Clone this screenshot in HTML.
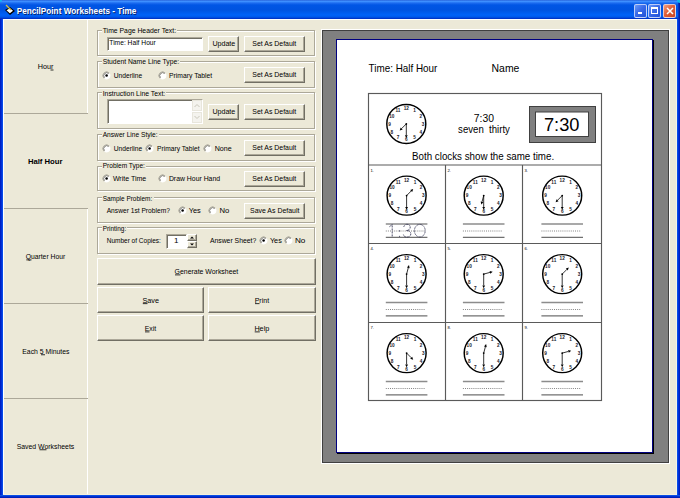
<!DOCTYPE html><html><head><meta charset="utf-8"><style>
*{margin:0;padding:0;box-sizing:border-box}
html,body{width:680px;height:498px;overflow:hidden;background:#ECE9D8;font-family:"Liberation Sans", sans-serif;}
.abs{position:absolute}
.gb{position:absolute;border:1px solid #ACA899;box-shadow:1px 1px 0 #fff, inset 1px 1px 0 #fff;}
.btn{position:absolute;background:#ECE9D8;border-top:1px solid #fff;border-left:1px solid #fff;border-right:1px solid #716F64;border-bottom:1px solid #716F64;box-shadow:inset -1px -1px 0 #ACA899;}
.edit{position:absolute;background:#fff;border-top:1px solid #ACA899;border-left:1px solid #ACA899;border-right:1px solid #fff;border-bottom:1px solid #fff;box-shadow:inset 1px 1px 0 #716F64;}
svg{position:absolute;left:0;top:0;overflow:visible}
</style></head><body>

<div class="abs" style="left:0;top:0;width:680px;height:19px;background:linear-gradient(#2A66DC 0px,#3D8EFF 1.5px,#1D6CF0 3px,#0055E5 5px,#0053E0 10px,#0062F8 15px,#0058EA 17px,#0035C8 18.5px,#0030C0 19px);"></div>
<svg style="left:4px;top:4px" width="12" height="12" viewBox="0 0 12 12">
<path d="M1 6 L6 3 L11 7 L6 11 Z" fill="#000"/><path d="M2.5 6.2 L6 4.2 L9 6.8 L5.8 9.2 Z" fill="#fff"/>
<path d="M2 1 L7 6" stroke="#D8C040" stroke-width="1.2"/></svg>
<div class="abs" style="left:633.5px;top:4px;width:13px;height:13.5px;border-radius:2px;border:1px solid rgba(235,240,255,.75);background:linear-gradient(135deg,#6A9AF8,#3A6AE8 45%,#2052D8);"><div class="abs" style="left:3px;top:7px;width:4px;height:2px;background:#fff"></div></div>
<div class="abs" style="left:648px;top:4px;width:13px;height:13.5px;border-radius:2px;border:1px solid rgba(235,240,255,.75);background:linear-gradient(135deg,#6A9AF8,#3A6AE8 45%,#2052D8);"><div class="abs" style="left:2px;top:2px;width:7px;height:7px;border:1px solid #fff;border-top-width:2px"></div></div>
<div class="abs" style="left:663px;top:4px;width:13px;height:13.5px;border-radius:2px;border:1px solid rgba(235,240,255,.75);background:linear-gradient(135deg,#F2A080,#E0603A 45%,#C84420);"><svg style="left:1.5px;top:1.5px" width="8" height="8"><path d="M1 1L7 7M7 1L1 7" stroke="#fff" stroke-width="1.5"/></svg></div>
<div class="abs" style="left:678px;top:2px;width:2px;height:17px;background:linear-gradient(90deg,#0A3AD0,#001A90)"></div>
<div class="abs" style="left:0;top:0;width:2px;height:2px;background:#10B8F0;border-bottom-right-radius:2px"></div>
<div class="abs" style="left:677px;top:0;width:3px;height:3px;background:#10B8F0;border-bottom-left-radius:3px"></div>
<div class="abs" style="left:0;top:19px;width:3px;height:479px;background:linear-gradient(90deg,#0018B8,#0030D8 50%,#0A58F0)"></div>
<div class="abs" style="left:677px;top:19px;width:3px;height:479px;background:linear-gradient(90deg,#0A58F0,#0030D8 50%,#0018B8)"></div>
<div class="abs" style="left:0;top:495px;width:680px;height:3px;background:linear-gradient(#1060F0,#0030D0 50%,#0018B0)"></div>
<div class="abs" style="left:3px;top:19px;width:674px;height:1px;background:#fff"></div>
<div class="abs" style="left:3px;top:19px;width:1px;height:476px;background:#fff"></div>
<div class="abs" style="left:87px;top:20px;width:1px;height:94px;background:#fff"></div>
<div class="abs" style="left:87px;top:208px;width:1px;height:287px;background:#fff"></div>
<div class="abs" style="left:4px;top:113px;width:84px;height:1px;background:#ACA899"></div>
<div class="abs" style="left:4px;top:208px;width:84px;height:1px;background:#ACA899"></div>
<div class="abs" style="left:4px;top:303px;width:84px;height:1px;background:#ACA899"></div>
<div class="abs" style="left:4px;top:398px;width:84px;height:1px;background:#ACA899"></div>
<div class="abs" style="left:3px;top:494px;width:674px;height:1px;background:#F6F0DC"></div>
<div class="abs" style="left:676px;top:19px;width:1px;height:476px;background:#F6F3E6"></div>
<div class="gb" style="left:97px;top:30px;width:218px;height:26px"></div>
<div class="abs" style="left:102px;top:30px;width:75.3px;height:2px;background:#ECE9D8"></div>
<div class="edit" style="left:107px;top:37px;width:96px;height:14px"></div>
<div class="btn" style="left:208px;top:36px;width:31px;height:16px"></div>
<div class="btn" style="left:244px;top:36px;width:61px;height:16px"></div>
<div class="gb" style="left:97px;top:61px;width:218px;height:27px"></div>
<div class="abs" style="left:102px;top:61px;width:78.3px;height:2px;background:#ECE9D8"></div>
<svg style="left:101.80px;top:71.00px" width="10" height="10" viewBox="0 0 10 10"><circle cx="4.6" cy="4.6" r="3.8" fill="#fff"/><path d="M1.9 7.3 A3.8 3.8 0 0 1 7.3 1.9" fill="none" stroke="#ACA899" stroke-width="0.9"/><path d="M2.55 6.65 A2.9 2.9 0 0 1 6.65 2.55" fill="none" stroke="#5E5C52" stroke-width="0.8"/><circle cx="4.6" cy="4.6" r="1.25" fill="#000"/></svg>
<svg style="left:157.50px;top:71.00px" width="10" height="10" viewBox="0 0 10 10"><circle cx="4.6" cy="4.6" r="3.8" fill="#fff"/><path d="M1.9 7.3 A3.8 3.8 0 0 1 7.3 1.9" fill="none" stroke="#ACA899" stroke-width="0.9"/><path d="M2.55 6.65 A2.9 2.9 0 0 1 6.65 2.55" fill="none" stroke="#5E5C52" stroke-width="0.8"/></svg>
<div class="btn" style="left:244px;top:67px;width:61px;height:16px"></div>
<div class="gb" style="left:97px;top:92px;width:218px;height:37px"></div>
<div class="abs" style="left:102px;top:92px;width:64.4px;height:2px;background:#ECE9D8"></div>
<div class="edit" style="left:107px;top:99px;width:96px;height:25px"></div>
<div class="abs" style="left:192px;top:100px;width:10px;height:11px;background:#F4F3EE;border:1px solid #E8E6DC"></div>
<div class="abs" style="left:192px;top:112px;width:10px;height:11px;background:#F4F3EE;border:1px solid #E8E6DC"></div>
<svg style="left:192px;top:100px" width="10" height="23"><path d="M2.5 7 L5 4.5 L7.5 7" stroke="#C9C7BA" fill="none"/><path d="M2.5 16 L5 18.5 L7.5 16" stroke="#C9C7BA" fill="none"/></svg>
<div class="btn" style="left:208px;top:104px;width:31px;height:16px"></div>
<div class="btn" style="left:244px;top:104px;width:61px;height:16px"></div>
<div class="gb" style="left:97px;top:134px;width:218px;height:27px"></div>
<div class="abs" style="left:102px;top:134px;width:56.8px;height:2px;background:#ECE9D8"></div>
<svg style="left:102.00px;top:143.80px" width="10" height="10" viewBox="0 0 10 10"><circle cx="4.6" cy="4.6" r="3.8" fill="#fff"/><path d="M1.9 7.3 A3.8 3.8 0 0 1 7.3 1.9" fill="none" stroke="#ACA899" stroke-width="0.9"/><path d="M2.55 6.65 A2.9 2.9 0 0 1 6.65 2.55" fill="none" stroke="#5E5C52" stroke-width="0.8"/></svg>
<svg style="left:145.30px;top:143.80px" width="10" height="10" viewBox="0 0 10 10"><circle cx="4.6" cy="4.6" r="3.8" fill="#fff"/><path d="M1.9 7.3 A3.8 3.8 0 0 1 7.3 1.9" fill="none" stroke="#ACA899" stroke-width="0.9"/><path d="M2.55 6.65 A2.9 2.9 0 0 1 6.65 2.55" fill="none" stroke="#5E5C52" stroke-width="0.8"/><circle cx="4.6" cy="4.6" r="1.25" fill="#000"/></svg>
<svg style="left:203.00px;top:143.80px" width="10" height="10" viewBox="0 0 10 10"><circle cx="4.6" cy="4.6" r="3.8" fill="#fff"/><path d="M1.9 7.3 A3.8 3.8 0 0 1 7.3 1.9" fill="none" stroke="#ACA899" stroke-width="0.9"/><path d="M2.55 6.65 A2.9 2.9 0 0 1 6.65 2.55" fill="none" stroke="#5E5C52" stroke-width="0.8"/></svg>
<div class="btn" style="left:244px;top:140px;width:61px;height:16px"></div>
<div class="gb" style="left:97px;top:166px;width:218px;height:25px"></div>
<div class="abs" style="left:102px;top:166px;width:44.1px;height:2px;background:#ECE9D8"></div>
<svg style="left:101.90px;top:174.00px" width="10" height="10" viewBox="0 0 10 10"><circle cx="4.6" cy="4.6" r="3.8" fill="#fff"/><path d="M1.9 7.3 A3.8 3.8 0 0 1 7.3 1.9" fill="none" stroke="#ACA899" stroke-width="0.9"/><path d="M2.55 6.65 A2.9 2.9 0 0 1 6.65 2.55" fill="none" stroke="#5E5C52" stroke-width="0.8"/><circle cx="4.6" cy="4.6" r="1.25" fill="#000"/></svg>
<svg style="left:157.50px;top:174.00px" width="10" height="10" viewBox="0 0 10 10"><circle cx="4.6" cy="4.6" r="3.8" fill="#fff"/><path d="M1.9 7.3 A3.8 3.8 0 0 1 7.3 1.9" fill="none" stroke="#ACA899" stroke-width="0.9"/><path d="M2.55 6.65 A2.9 2.9 0 0 1 6.65 2.55" fill="none" stroke="#5E5C52" stroke-width="0.8"/></svg>
<div class="btn" style="left:244px;top:171px;width:61px;height:16px"></div>
<div class="gb" style="left:97px;top:197px;width:218px;height:26px"></div>
<div class="abs" style="left:102px;top:197px;width:51.5px;height:2px;background:#ECE9D8"></div>
<svg style="left:177.60px;top:205.80px" width="10" height="10" viewBox="0 0 10 10"><circle cx="4.6" cy="4.6" r="3.8" fill="#fff"/><path d="M1.9 7.3 A3.8 3.8 0 0 1 7.3 1.9" fill="none" stroke="#ACA899" stroke-width="0.9"/><path d="M2.55 6.65 A2.9 2.9 0 0 1 6.65 2.55" fill="none" stroke="#5E5C52" stroke-width="0.8"/><circle cx="4.6" cy="4.6" r="1.25" fill="#000"/></svg>
<svg style="left:208.00px;top:205.80px" width="10" height="10" viewBox="0 0 10 10"><circle cx="4.6" cy="4.6" r="3.8" fill="#fff"/><path d="M1.9 7.3 A3.8 3.8 0 0 1 7.3 1.9" fill="none" stroke="#ACA899" stroke-width="0.9"/><path d="M2.55 6.65 A2.9 2.9 0 0 1 6.65 2.55" fill="none" stroke="#5E5C52" stroke-width="0.8"/></svg>
<div class="btn" style="left:244px;top:203px;width:61px;height:16px"></div>
<div class="gb" style="left:97px;top:227px;width:218px;height:27px"></div>
<div class="abs" style="left:102px;top:227px;width:25.4px;height:2px;background:#ECE9D8"></div>
<div class="edit" style="left:166px;top:234px;width:21px;height:14.5px"></div>
<div class="btn" style="left:187px;top:234px;width:10px;height:7px"></div>
<div class="btn" style="left:187px;top:241px;width:10px;height:7px"></div>
<svg style="left:187px;top:234px" width="10" height="14"><path d="M3 4.5 L5 2.5 L7 4.5Z" fill="#000"/><path d="M3 9.5 L5 11.5 L7 9.5Z" fill="#000"/></svg>
<svg style="left:258.80px;top:235.80px" width="10" height="10" viewBox="0 0 10 10"><circle cx="4.6" cy="4.6" r="3.8" fill="#fff"/><path d="M1.9 7.3 A3.8 3.8 0 0 1 7.3 1.9" fill="none" stroke="#ACA899" stroke-width="0.9"/><path d="M2.55 6.65 A2.9 2.9 0 0 1 6.65 2.55" fill="none" stroke="#5E5C52" stroke-width="0.8"/><circle cx="4.6" cy="4.6" r="1.25" fill="#000"/></svg>
<svg style="left:284.30px;top:235.80px" width="10" height="10" viewBox="0 0 10 10"><circle cx="4.6" cy="4.6" r="3.8" fill="#fff"/><path d="M1.9 7.3 A3.8 3.8 0 0 1 7.3 1.9" fill="none" stroke="#ACA899" stroke-width="0.9"/><path d="M2.55 6.65 A2.9 2.9 0 0 1 6.65 2.55" fill="none" stroke="#5E5C52" stroke-width="0.8"/></svg>
<div class="btn" style="left:97px;top:258px;width:219px;height:27px"></div>
<div class="btn" style="left:97px;top:287px;width:107px;height:26px"></div>
<div class="btn" style="left:208px;top:287px;width:108px;height:26px"></div>
<div class="btn" style="left:97px;top:315px;width:107px;height:26px"></div>
<div class="btn" style="left:208px;top:315px;width:108px;height:26px"></div>
<div class="abs" style="left:321px;top:29px;width:349px;height:435px;border:1px solid #fff;"></div>
<div class="abs" style="left:322px;top:30px;width:347px;height:433px;background:#808080;border:1px solid #404040"></div>
<div class="abs" style="left:336px;top:39px;width:317px;height:414px;background:#fff;border:1px solid #000080;box-shadow:1px 1px 0 #000"></div>
<svg width="680" height="498" viewBox="0 0 680 498" font-family='"Liberation Sans", sans-serif'><text x="368.59" y="71.60" font-size="10.2" textLength="68.82" lengthAdjust="spacingAndGlyphs" xml:space="preserve">Time: Half Hour</text><text x="491.59" y="71.60" font-size="10.2" textLength="27.82" lengthAdjust="spacingAndGlyphs" xml:space="preserve">Name</text><rect x="368.5" y="93.5" width="233" height="307" fill="none" stroke="#5a5a5a" stroke-width="1.15"/><line x1="368.5" y1="165" x2="601.5" y2="165" stroke="#5a5a5a" stroke-width="1.15"/><line x1="368.5" y1="243.5" x2="601.5" y2="243.5" stroke="#5a5a5a" stroke-width="1.15"/><line x1="368.5" y1="322.5" x2="601.5" y2="322.5" stroke="#5a5a5a" stroke-width="1.15"/><line x1="445.5" y1="165" x2="445.5" y2="400.5" stroke="#5a5a5a" stroke-width="1.15"/><line x1="522.5" y1="165" x2="522.5" y2="400.5" stroke="#5a5a5a" stroke-width="1.15"/><text x="473.80" y="122.00" font-size="10" textLength="20.20" lengthAdjust="spacingAndGlyphs" xml:space="preserve">7:30</text><text x="458.10" y="133.40" font-size="10" textLength="51.80" lengthAdjust="spacingAndGlyphs" xml:space="preserve">seven  thirty</text><text x="412.09" y="160.40" font-size="10.2" textLength="142.02" lengthAdjust="spacingAndGlyphs" xml:space="preserve">Both clocks show the same time.</text><rect x="529.5" y="106.5" width="66" height="36" fill="#808080" stroke="#404040" stroke-width="1"/><rect x="535.5" y="112" width="53" height="24.5" fill="#fff" stroke="#404040" stroke-width="1"/><text x="543.96" y="131.20" font-size="18.5" textLength="35.58" lengthAdjust="spacingAndGlyphs" xml:space="preserve">7:30</text><circle cx="406.3" cy="123.9" r="19.5" fill="#fff" stroke="#000" stroke-width="1.45"/><text x="414.67" y="111.97" font-size="4.7" font-weight="bold" text-anchor="middle" fill="#1a1a2a">1</text><text x="420.80" y="117.75" font-size="4.7" font-weight="bold" text-anchor="middle" fill="#1a1a2a">2</text><text x="423.05" y="125.65" font-size="4.7" font-weight="bold" text-anchor="middle" fill="#1a1a2a">3</text><text x="420.80" y="133.55" font-size="4.7" font-weight="bold" text-anchor="middle" fill="#1a1a2a">4</text><text x="414.67" y="139.33" font-size="4.7" font-weight="bold" text-anchor="middle" fill="#1a1a2a">5</text><text x="406.30" y="141.45" font-size="4.7" font-weight="bold" text-anchor="middle" fill="#1a1a2a">6</text><text x="397.93" y="139.33" font-size="4.7" font-weight="bold" text-anchor="middle" fill="#1a1a2a">7</text><text x="391.80" y="133.55" font-size="4.7" font-weight="bold" text-anchor="middle" fill="#1a1a2a">8</text><text x="389.55" y="125.65" font-size="4.7" font-weight="bold" text-anchor="middle" fill="#1a1a2a">9</text><text x="391.80" y="117.75" font-size="4.7" font-weight="bold" text-anchor="middle" fill="#1a1a2a">10</text><text x="397.93" y="111.97" font-size="4.7" font-weight="bold" text-anchor="middle" fill="#1a1a2a">11</text><text x="406.30" y="109.85" font-size="4.7" font-weight="bold" text-anchor="middle" fill="#1a1a2a">12</text><line x1="406.3" y1="123.9" x2="406.30" y2="135.30" stroke="#000" stroke-width="0.8"/><path d="M406.30 138.10 L404.90 135.30 L407.70 135.30Z" fill="#000"/><line x1="406.3" y1="123.9" x2="401.70" y2="128.50" stroke="#000" stroke-width="0.8"/><path d="M399.72 130.48 L400.71 127.51 L402.69 129.49Z" fill="#000"/><circle cx="406.3" cy="123.9" r="0.9" fill="#000"/><text x="370.5" y="171.6" font-size="4.2" fill="#000">1.</text><circle cx="406.6" cy="195.6" r="19.5" fill="#fff" stroke="#000" stroke-width="1.45"/><text x="414.97" y="183.67" font-size="4.7" font-weight="bold" text-anchor="middle" fill="#1a1a2a">1</text><text x="421.10" y="189.45" font-size="4.7" font-weight="bold" text-anchor="middle" fill="#1a1a2a">2</text><text x="423.35" y="197.35" font-size="4.7" font-weight="bold" text-anchor="middle" fill="#1a1a2a">3</text><text x="421.10" y="205.25" font-size="4.7" font-weight="bold" text-anchor="middle" fill="#1a1a2a">4</text><text x="414.97" y="211.03" font-size="4.7" font-weight="bold" text-anchor="middle" fill="#1a1a2a">5</text><text x="406.60" y="213.15" font-size="4.7" font-weight="bold" text-anchor="middle" fill="#1a1a2a">6</text><text x="398.23" y="211.03" font-size="4.7" font-weight="bold" text-anchor="middle" fill="#1a1a2a">7</text><text x="392.10" y="205.25" font-size="4.7" font-weight="bold" text-anchor="middle" fill="#1a1a2a">8</text><text x="389.85" y="197.35" font-size="4.7" font-weight="bold" text-anchor="middle" fill="#1a1a2a">9</text><text x="392.10" y="189.45" font-size="4.7" font-weight="bold" text-anchor="middle" fill="#1a1a2a">10</text><text x="398.23" y="183.67" font-size="4.7" font-weight="bold" text-anchor="middle" fill="#1a1a2a">11</text><text x="406.60" y="181.55" font-size="4.7" font-weight="bold" text-anchor="middle" fill="#1a1a2a">12</text><line x1="406.6" y1="195.6" x2="406.60" y2="207.00" stroke="#000" stroke-width="0.8"/><path d="M406.60 209.80 L405.20 207.00 L408.00 207.00Z" fill="#000"/><line x1="406.6" y1="195.6" x2="411.20" y2="191.00" stroke="#000" stroke-width="0.8"/><path d="M413.18 189.02 L412.19 191.99 L410.21 190.01Z" fill="#000"/><circle cx="406.6" cy="195.6" r="0.9" fill="#000"/><line x1="385.8" y1="224" x2="427.40000000000003" y2="224" stroke="#8C8C8C" stroke-width="1.4"/><line x1="385.8" y1="231" x2="425.40000000000003" y2="231" stroke="#777" stroke-width="0.9" stroke-dasharray="1,1.1"/><line x1="385.8" y1="237.4" x2="427.40000000000003" y2="237.4" stroke="#707070" stroke-width="1.4"/><path d="M392.2 224.6 L392.2 237 M392.2 224.6 L389.3 226.8" fill="none" stroke="#28284a" stroke-width="0.9" stroke-dasharray="0.9,0.6"/><circle cx="399.6" cy="230.9" r="0.55" fill="#28284a"/><circle cx="399.6" cy="236.3" r="0.55" fill="#28284a"/><path d="M403.8 226.8 C404.3 224.8 406 224.3 407 224.3 C409 224.3 410.2 225.5 410.2 227.2 C410.2 229 408.8 230.5 406.3 230.5 C409 230.5 410.8 231.8 410.8 233.8 C410.8 235.8 409.2 237.1 407 237.1 C405 237.1 403.7 236.2 403.4 234.5" fill="none" stroke="#28284a" stroke-width="0.9" stroke-dasharray="0.9,0.6"/><ellipse cx="419.8" cy="230.7" rx="5.4" ry="6.3" fill="none" stroke="#28284a" stroke-width="0.9" stroke-dasharray="0.9,0.6"/><text x="447.5" y="171.6" font-size="4.2" fill="#000">2.</text><circle cx="483.7" cy="195.6" r="19.5" fill="#fff" stroke="#000" stroke-width="1.45"/><text x="492.07" y="183.67" font-size="4.7" font-weight="bold" text-anchor="middle" fill="#1a1a2a">1</text><text x="498.20" y="189.45" font-size="4.7" font-weight="bold" text-anchor="middle" fill="#1a1a2a">2</text><text x="500.45" y="197.35" font-size="4.7" font-weight="bold" text-anchor="middle" fill="#1a1a2a">3</text><text x="498.20" y="205.25" font-size="4.7" font-weight="bold" text-anchor="middle" fill="#1a1a2a">4</text><text x="492.07" y="211.03" font-size="4.7" font-weight="bold" text-anchor="middle" fill="#1a1a2a">5</text><text x="483.70" y="213.15" font-size="4.7" font-weight="bold" text-anchor="middle" fill="#1a1a2a">6</text><text x="475.33" y="211.03" font-size="4.7" font-weight="bold" text-anchor="middle" fill="#1a1a2a">7</text><text x="469.20" y="205.25" font-size="4.7" font-weight="bold" text-anchor="middle" fill="#1a1a2a">8</text><text x="466.95" y="197.35" font-size="4.7" font-weight="bold" text-anchor="middle" fill="#1a1a2a">9</text><text x="469.20" y="189.45" font-size="4.7" font-weight="bold" text-anchor="middle" fill="#1a1a2a">10</text><text x="475.33" y="183.67" font-size="4.7" font-weight="bold" text-anchor="middle" fill="#1a1a2a">11</text><text x="483.70" y="181.55" font-size="4.7" font-weight="bold" text-anchor="middle" fill="#1a1a2a">12</text><line x1="483.7" y1="195.6" x2="483.70" y2="207.00" stroke="#000" stroke-width="0.8"/><path d="M483.70 209.80 L482.30 207.00 L485.10 207.00Z" fill="#000"/><line x1="483.7" y1="195.6" x2="482.02" y2="201.88" stroke="#000" stroke-width="0.8"/><path d="M481.29 204.58 L480.67 201.52 L483.37 202.24Z" fill="#000"/><circle cx="483.7" cy="195.6" r="0.9" fill="#000"/><line x1="462.9" y1="224" x2="504.5" y2="224" stroke="#8C8C8C" stroke-width="1.4"/><line x1="462.9" y1="231" x2="502.5" y2="231" stroke="#777" stroke-width="0.9" stroke-dasharray="1,1.1"/><line x1="462.9" y1="237.4" x2="504.5" y2="237.4" stroke="#707070" stroke-width="1.4"/><text x="524.5" y="171.6" font-size="4.2" fill="#000">3.</text><circle cx="562.2" cy="195.6" r="19.5" fill="#fff" stroke="#000" stroke-width="1.45"/><text x="570.57" y="183.67" font-size="4.7" font-weight="bold" text-anchor="middle" fill="#1a1a2a">1</text><text x="576.70" y="189.45" font-size="4.7" font-weight="bold" text-anchor="middle" fill="#1a1a2a">2</text><text x="578.95" y="197.35" font-size="4.7" font-weight="bold" text-anchor="middle" fill="#1a1a2a">3</text><text x="576.70" y="205.25" font-size="4.7" font-weight="bold" text-anchor="middle" fill="#1a1a2a">4</text><text x="570.57" y="211.03" font-size="4.7" font-weight="bold" text-anchor="middle" fill="#1a1a2a">5</text><text x="562.20" y="213.15" font-size="4.7" font-weight="bold" text-anchor="middle" fill="#1a1a2a">6</text><text x="553.83" y="211.03" font-size="4.7" font-weight="bold" text-anchor="middle" fill="#1a1a2a">7</text><text x="547.70" y="205.25" font-size="4.7" font-weight="bold" text-anchor="middle" fill="#1a1a2a">8</text><text x="545.45" y="197.35" font-size="4.7" font-weight="bold" text-anchor="middle" fill="#1a1a2a">9</text><text x="547.70" y="189.45" font-size="4.7" font-weight="bold" text-anchor="middle" fill="#1a1a2a">10</text><text x="553.83" y="183.67" font-size="4.7" font-weight="bold" text-anchor="middle" fill="#1a1a2a">11</text><text x="562.20" y="181.55" font-size="4.7" font-weight="bold" text-anchor="middle" fill="#1a1a2a">12</text><line x1="562.2" y1="195.6" x2="562.20" y2="207.00" stroke="#000" stroke-width="0.8"/><path d="M562.20 209.80 L560.80 207.00 L563.60 207.00Z" fill="#000"/><line x1="562.2" y1="195.6" x2="557.60" y2="200.20" stroke="#000" stroke-width="0.8"/><path d="M555.62 202.18 L556.61 199.21 L558.59 201.19Z" fill="#000"/><circle cx="562.2" cy="195.6" r="0.9" fill="#000"/><line x1="541.4000000000001" y1="224" x2="583.0" y2="224" stroke="#8C8C8C" stroke-width="1.4"/><line x1="541.4000000000001" y1="231" x2="581.0" y2="231" stroke="#777" stroke-width="0.9" stroke-dasharray="1,1.1"/><line x1="541.4000000000001" y1="237.4" x2="583.0" y2="237.4" stroke="#707070" stroke-width="1.4"/><text x="370.5" y="250.1" font-size="4.2" fill="#000">4.</text><circle cx="406.6" cy="274.1" r="19.5" fill="#fff" stroke="#000" stroke-width="1.45"/><text x="414.97" y="262.17" font-size="4.7" font-weight="bold" text-anchor="middle" fill="#1a1a2a">1</text><text x="421.10" y="267.95" font-size="4.7" font-weight="bold" text-anchor="middle" fill="#1a1a2a">2</text><text x="423.35" y="275.85" font-size="4.7" font-weight="bold" text-anchor="middle" fill="#1a1a2a">3</text><text x="421.10" y="283.75" font-size="4.7" font-weight="bold" text-anchor="middle" fill="#1a1a2a">4</text><text x="414.97" y="289.53" font-size="4.7" font-weight="bold" text-anchor="middle" fill="#1a1a2a">5</text><text x="406.60" y="291.65" font-size="4.7" font-weight="bold" text-anchor="middle" fill="#1a1a2a">6</text><text x="398.23" y="289.53" font-size="4.7" font-weight="bold" text-anchor="middle" fill="#1a1a2a">7</text><text x="392.10" y="283.75" font-size="4.7" font-weight="bold" text-anchor="middle" fill="#1a1a2a">8</text><text x="389.85" y="275.85" font-size="4.7" font-weight="bold" text-anchor="middle" fill="#1a1a2a">9</text><text x="392.10" y="267.95" font-size="4.7" font-weight="bold" text-anchor="middle" fill="#1a1a2a">10</text><text x="398.23" y="262.17" font-size="4.7" font-weight="bold" text-anchor="middle" fill="#1a1a2a">11</text><text x="406.60" y="260.05" font-size="4.7" font-weight="bold" text-anchor="middle" fill="#1a1a2a">12</text><line x1="406.6" y1="274.1" x2="406.60" y2="285.50" stroke="#000" stroke-width="0.8"/><path d="M406.60 288.30 L405.20 285.50 L408.00 285.50Z" fill="#000"/><line x1="406.6" y1="274.1" x2="408.28" y2="267.82" stroke="#000" stroke-width="0.8"/><path d="M409.01 265.12 L409.63 268.18 L406.93 267.46Z" fill="#000"/><circle cx="406.6" cy="274.1" r="0.9" fill="#000"/><line x1="385.8" y1="302.5" x2="427.40000000000003" y2="302.5" stroke="#8C8C8C" stroke-width="1.4"/><line x1="385.8" y1="309.5" x2="425.40000000000003" y2="309.5" stroke="#777" stroke-width="0.9" stroke-dasharray="1,1.1"/><line x1="385.8" y1="315.9" x2="427.40000000000003" y2="315.9" stroke="#707070" stroke-width="1.4"/><text x="447.5" y="250.1" font-size="4.2" fill="#000">5.</text><circle cx="483.7" cy="274.1" r="19.5" fill="#fff" stroke="#000" stroke-width="1.45"/><text x="492.07" y="262.17" font-size="4.7" font-weight="bold" text-anchor="middle" fill="#1a1a2a">1</text><text x="498.20" y="267.95" font-size="4.7" font-weight="bold" text-anchor="middle" fill="#1a1a2a">2</text><text x="500.45" y="275.85" font-size="4.7" font-weight="bold" text-anchor="middle" fill="#1a1a2a">3</text><text x="498.20" y="283.75" font-size="4.7" font-weight="bold" text-anchor="middle" fill="#1a1a2a">4</text><text x="492.07" y="289.53" font-size="4.7" font-weight="bold" text-anchor="middle" fill="#1a1a2a">5</text><text x="483.70" y="291.65" font-size="4.7" font-weight="bold" text-anchor="middle" fill="#1a1a2a">6</text><text x="475.33" y="289.53" font-size="4.7" font-weight="bold" text-anchor="middle" fill="#1a1a2a">7</text><text x="469.20" y="283.75" font-size="4.7" font-weight="bold" text-anchor="middle" fill="#1a1a2a">8</text><text x="466.95" y="275.85" font-size="4.7" font-weight="bold" text-anchor="middle" fill="#1a1a2a">9</text><text x="469.20" y="267.95" font-size="4.7" font-weight="bold" text-anchor="middle" fill="#1a1a2a">10</text><text x="475.33" y="262.17" font-size="4.7" font-weight="bold" text-anchor="middle" fill="#1a1a2a">11</text><text x="483.70" y="260.05" font-size="4.7" font-weight="bold" text-anchor="middle" fill="#1a1a2a">12</text><line x1="483.7" y1="274.1" x2="483.70" y2="285.50" stroke="#000" stroke-width="0.8"/><path d="M483.70 288.30 L482.30 285.50 L485.10 285.50Z" fill="#000"/><line x1="483.7" y1="274.1" x2="489.98" y2="272.42" stroke="#000" stroke-width="0.8"/><path d="M492.68 271.69 L490.34 273.77 L489.62 271.07Z" fill="#000"/><circle cx="483.7" cy="274.1" r="0.9" fill="#000"/><line x1="462.9" y1="302.5" x2="504.5" y2="302.5" stroke="#8C8C8C" stroke-width="1.4"/><line x1="462.9" y1="309.5" x2="502.5" y2="309.5" stroke="#777" stroke-width="0.9" stroke-dasharray="1,1.1"/><line x1="462.9" y1="315.9" x2="504.5" y2="315.9" stroke="#707070" stroke-width="1.4"/><text x="524.5" y="250.1" font-size="4.2" fill="#000">6.</text><circle cx="562.2" cy="274.1" r="19.5" fill="#fff" stroke="#000" stroke-width="1.45"/><text x="570.57" y="262.17" font-size="4.7" font-weight="bold" text-anchor="middle" fill="#1a1a2a">1</text><text x="576.70" y="267.95" font-size="4.7" font-weight="bold" text-anchor="middle" fill="#1a1a2a">2</text><text x="578.95" y="275.85" font-size="4.7" font-weight="bold" text-anchor="middle" fill="#1a1a2a">3</text><text x="576.70" y="283.75" font-size="4.7" font-weight="bold" text-anchor="middle" fill="#1a1a2a">4</text><text x="570.57" y="289.53" font-size="4.7" font-weight="bold" text-anchor="middle" fill="#1a1a2a">5</text><text x="562.20" y="291.65" font-size="4.7" font-weight="bold" text-anchor="middle" fill="#1a1a2a">6</text><text x="553.83" y="289.53" font-size="4.7" font-weight="bold" text-anchor="middle" fill="#1a1a2a">7</text><text x="547.70" y="283.75" font-size="4.7" font-weight="bold" text-anchor="middle" fill="#1a1a2a">8</text><text x="545.45" y="275.85" font-size="4.7" font-weight="bold" text-anchor="middle" fill="#1a1a2a">9</text><text x="547.70" y="267.95" font-size="4.7" font-weight="bold" text-anchor="middle" fill="#1a1a2a">10</text><text x="553.83" y="262.17" font-size="4.7" font-weight="bold" text-anchor="middle" fill="#1a1a2a">11</text><text x="562.20" y="260.05" font-size="4.7" font-weight="bold" text-anchor="middle" fill="#1a1a2a">12</text><line x1="562.2" y1="274.1" x2="562.20" y2="285.50" stroke="#000" stroke-width="0.8"/><path d="M562.20 288.30 L560.80 285.50 L563.60 285.50Z" fill="#000"/><line x1="562.2" y1="274.1" x2="566.80" y2="269.50" stroke="#000" stroke-width="0.8"/><path d="M568.78 267.52 L567.79 270.49 L565.81 268.51Z" fill="#000"/><circle cx="562.2" cy="274.1" r="0.9" fill="#000"/><line x1="541.4000000000001" y1="302.5" x2="583.0" y2="302.5" stroke="#8C8C8C" stroke-width="1.4"/><line x1="541.4000000000001" y1="309.5" x2="581.0" y2="309.5" stroke="#777" stroke-width="0.9" stroke-dasharray="1,1.1"/><line x1="541.4000000000001" y1="315.9" x2="583.0" y2="315.9" stroke="#707070" stroke-width="1.4"/><text x="370.5" y="329.1" font-size="4.2" fill="#000">7.</text><circle cx="406.6" cy="353.1" r="19.5" fill="#fff" stroke="#000" stroke-width="1.45"/><text x="414.97" y="341.17" font-size="4.7" font-weight="bold" text-anchor="middle" fill="#1a1a2a">1</text><text x="421.10" y="346.95" font-size="4.7" font-weight="bold" text-anchor="middle" fill="#1a1a2a">2</text><text x="423.35" y="354.85" font-size="4.7" font-weight="bold" text-anchor="middle" fill="#1a1a2a">3</text><text x="421.10" y="362.75" font-size="4.7" font-weight="bold" text-anchor="middle" fill="#1a1a2a">4</text><text x="414.97" y="368.53" font-size="4.7" font-weight="bold" text-anchor="middle" fill="#1a1a2a">5</text><text x="406.60" y="370.65" font-size="4.7" font-weight="bold" text-anchor="middle" fill="#1a1a2a">6</text><text x="398.23" y="368.53" font-size="4.7" font-weight="bold" text-anchor="middle" fill="#1a1a2a">7</text><text x="392.10" y="362.75" font-size="4.7" font-weight="bold" text-anchor="middle" fill="#1a1a2a">8</text><text x="389.85" y="354.85" font-size="4.7" font-weight="bold" text-anchor="middle" fill="#1a1a2a">9</text><text x="392.10" y="346.95" font-size="4.7" font-weight="bold" text-anchor="middle" fill="#1a1a2a">10</text><text x="398.23" y="341.17" font-size="4.7" font-weight="bold" text-anchor="middle" fill="#1a1a2a">11</text><text x="406.60" y="339.05" font-size="4.7" font-weight="bold" text-anchor="middle" fill="#1a1a2a">12</text><line x1="406.6" y1="353.1" x2="406.60" y2="364.50" stroke="#000" stroke-width="0.8"/><path d="M406.60 367.30 L405.20 364.50 L408.00 364.50Z" fill="#000"/><line x1="406.6" y1="353.1" x2="411.20" y2="357.70" stroke="#000" stroke-width="0.8"/><path d="M413.18 359.68 L410.21 358.69 L412.19 356.71Z" fill="#000"/><circle cx="406.6" cy="353.1" r="0.9" fill="#000"/><line x1="385.8" y1="381.5" x2="427.40000000000003" y2="381.5" stroke="#8C8C8C" stroke-width="1.4"/><line x1="385.8" y1="388.5" x2="425.40000000000003" y2="388.5" stroke="#777" stroke-width="0.9" stroke-dasharray="1,1.1"/><line x1="385.8" y1="394.9" x2="427.40000000000003" y2="394.9" stroke="#707070" stroke-width="1.4"/><text x="447.5" y="329.1" font-size="4.2" fill="#000">8.</text><circle cx="483.7" cy="353.1" r="19.5" fill="#fff" stroke="#000" stroke-width="1.45"/><text x="492.07" y="341.17" font-size="4.7" font-weight="bold" text-anchor="middle" fill="#1a1a2a">1</text><text x="498.20" y="346.95" font-size="4.7" font-weight="bold" text-anchor="middle" fill="#1a1a2a">2</text><text x="500.45" y="354.85" font-size="4.7" font-weight="bold" text-anchor="middle" fill="#1a1a2a">3</text><text x="498.20" y="362.75" font-size="4.7" font-weight="bold" text-anchor="middle" fill="#1a1a2a">4</text><text x="492.07" y="368.53" font-size="4.7" font-weight="bold" text-anchor="middle" fill="#1a1a2a">5</text><text x="483.70" y="370.65" font-size="4.7" font-weight="bold" text-anchor="middle" fill="#1a1a2a">6</text><text x="475.33" y="368.53" font-size="4.7" font-weight="bold" text-anchor="middle" fill="#1a1a2a">7</text><text x="469.20" y="362.75" font-size="4.7" font-weight="bold" text-anchor="middle" fill="#1a1a2a">8</text><text x="466.95" y="354.85" font-size="4.7" font-weight="bold" text-anchor="middle" fill="#1a1a2a">9</text><text x="469.20" y="346.95" font-size="4.7" font-weight="bold" text-anchor="middle" fill="#1a1a2a">10</text><text x="475.33" y="341.17" font-size="4.7" font-weight="bold" text-anchor="middle" fill="#1a1a2a">11</text><text x="483.70" y="339.05" font-size="4.7" font-weight="bold" text-anchor="middle" fill="#1a1a2a">12</text><line x1="483.7" y1="353.1" x2="483.70" y2="364.50" stroke="#000" stroke-width="0.8"/><path d="M483.70 367.30 L482.30 364.50 L485.10 364.50Z" fill="#000"/><line x1="483.7" y1="353.1" x2="485.38" y2="346.82" stroke="#000" stroke-width="0.8"/><path d="M486.11 344.12 L486.73 347.18 L484.03 346.46Z" fill="#000"/><circle cx="483.7" cy="353.1" r="0.9" fill="#000"/><line x1="462.9" y1="381.5" x2="504.5" y2="381.5" stroke="#8C8C8C" stroke-width="1.4"/><line x1="462.9" y1="388.5" x2="502.5" y2="388.5" stroke="#777" stroke-width="0.9" stroke-dasharray="1,1.1"/><line x1="462.9" y1="394.9" x2="504.5" y2="394.9" stroke="#707070" stroke-width="1.4"/><text x="524.5" y="329.1" font-size="4.2" fill="#000">9.</text><circle cx="562.2" cy="353.1" r="19.5" fill="#fff" stroke="#000" stroke-width="1.45"/><text x="570.57" y="341.17" font-size="4.7" font-weight="bold" text-anchor="middle" fill="#1a1a2a">1</text><text x="576.70" y="346.95" font-size="4.7" font-weight="bold" text-anchor="middle" fill="#1a1a2a">2</text><text x="578.95" y="354.85" font-size="4.7" font-weight="bold" text-anchor="middle" fill="#1a1a2a">3</text><text x="576.70" y="362.75" font-size="4.7" font-weight="bold" text-anchor="middle" fill="#1a1a2a">4</text><text x="570.57" y="368.53" font-size="4.7" font-weight="bold" text-anchor="middle" fill="#1a1a2a">5</text><text x="562.20" y="370.65" font-size="4.7" font-weight="bold" text-anchor="middle" fill="#1a1a2a">6</text><text x="553.83" y="368.53" font-size="4.7" font-weight="bold" text-anchor="middle" fill="#1a1a2a">7</text><text x="547.70" y="362.75" font-size="4.7" font-weight="bold" text-anchor="middle" fill="#1a1a2a">8</text><text x="545.45" y="354.85" font-size="4.7" font-weight="bold" text-anchor="middle" fill="#1a1a2a">9</text><text x="547.70" y="346.95" font-size="4.7" font-weight="bold" text-anchor="middle" fill="#1a1a2a">10</text><text x="553.83" y="341.17" font-size="4.7" font-weight="bold" text-anchor="middle" fill="#1a1a2a">11</text><text x="562.20" y="339.05" font-size="4.7" font-weight="bold" text-anchor="middle" fill="#1a1a2a">12</text><line x1="562.2" y1="353.1" x2="562.20" y2="364.50" stroke="#000" stroke-width="0.8"/><path d="M562.20 367.30 L560.80 364.50 L563.60 364.50Z" fill="#000"/><line x1="562.2" y1="353.1" x2="568.48" y2="351.42" stroke="#000" stroke-width="0.8"/><path d="M571.18 350.69 L568.84 352.77 L568.12 350.07Z" fill="#000"/><circle cx="562.2" cy="353.1" r="0.9" fill="#000"/><line x1="541.4000000000001" y1="381.5" x2="583.0" y2="381.5" stroke="#8C8C8C" stroke-width="1.4"/><line x1="541.4000000000001" y1="388.5" x2="581.0" y2="388.5" stroke="#777" stroke-width="0.9" stroke-dasharray="1,1.1"/><line x1="541.4000000000001" y1="394.9" x2="583.0" y2="394.9" stroke="#707070" stroke-width="1.4"/></svg>
<svg width="680" height="498" font-family='"Liberation Sans", sans-serif'><text x="16.70" y="13.70" font-size="8.4" font-weight="bold" fill="#fff" textLength="119.60" lengthAdjust="spacingAndGlyphs" style="text-shadow:1px 1px 0 #0A246A">PencilPoint Worksheets - Time</text><text x="37.80" y="69.25" font-size="7.9" fill="#000" textLength="15.60" lengthAdjust="spacingAndGlyphs">Hour</text><rect x="50.50" y="69.60" width="3.00" height="0.8" fill="#000"/><text x="27.90" y="164.25" font-size="7.6" font-weight="bold" fill="#000" textLength="34.60" lengthAdjust="spacingAndGlyphs">Half Hour</text><text x="25.70" y="259.15" font-size="7.9" fill="#000" textLength="39.50" lengthAdjust="spacingAndGlyphs">Quarter Hour</text><rect x="26.30" y="259.50" width="5.20" height="0.8" fill="#000"/><text x="22.30" y="354.05" font-size="7.9" fill="#000" textLength="47.20" lengthAdjust="spacingAndGlyphs">Each 5 Minutes</text><rect x="41.00" y="354.40" width="4.00" height="0.8" fill="#000"/><text x="16.70" y="449.05" font-size="7.9" fill="#000" textLength="57.60" lengthAdjust="spacingAndGlyphs">Saved Worksheets</text><rect x="39.50" y="449.40" width="7.00" height="0.8" fill="#000"/><text x="102.70" y="33.25" font-size="7.9" fill="#000" textLength="73.40" lengthAdjust="spacingAndGlyphs">Time Page Header Text:</text><text x="109.30" y="45.45" font-size="7.9" fill="#000" textLength="46.50" lengthAdjust="spacingAndGlyphs">Time: Half Hour</text><text x="212.40" y="46.45" font-size="7.9" fill="#000" textLength="22.90" lengthAdjust="spacingAndGlyphs">Update</text><text x="252.30" y="46.45" font-size="7.9" fill="#000" textLength="44.00" lengthAdjust="spacingAndGlyphs">Set As Default</text><text x="102.70" y="64.45" font-size="7.9" fill="#000" textLength="76.40" lengthAdjust="spacingAndGlyphs">Student Name Line Type:</text><text x="113.70" y="78.45" font-size="7.9" fill="#000" textLength="28.60" lengthAdjust="spacingAndGlyphs">Underline</text><text x="169.10" y="78.45" font-size="7.9" fill="#000" textLength="43.10" lengthAdjust="spacingAndGlyphs">Primary Tablet</text><text x="252.30" y="77.45" font-size="7.9" fill="#000" textLength="44.00" lengthAdjust="spacingAndGlyphs">Set As Default</text><text x="102.70" y="96.15" font-size="7.9" fill="#000" textLength="62.50" lengthAdjust="spacingAndGlyphs">Instruction Line Text:</text><text x="212.40" y="114.45" font-size="7.9" fill="#000" textLength="22.90" lengthAdjust="spacingAndGlyphs">Update</text><text x="252.30" y="114.45" font-size="7.9" fill="#000" textLength="44.00" lengthAdjust="spacingAndGlyphs">Set As Default</text><text x="102.70" y="136.85" font-size="7.9" fill="#000" textLength="54.90" lengthAdjust="spacingAndGlyphs">Answer Line Style:</text><text x="113.70" y="150.85" font-size="7.9" fill="#000" textLength="28.60" lengthAdjust="spacingAndGlyphs">Underline</text><text x="157.00" y="150.85" font-size="7.9" fill="#000" textLength="42.50" lengthAdjust="spacingAndGlyphs">Primary Tablet</text><text x="214.70" y="150.85" font-size="7.9" fill="#000" textLength="17.00" lengthAdjust="spacingAndGlyphs">None</text><text x="252.30" y="150.45" font-size="7.9" fill="#000" textLength="44.00" lengthAdjust="spacingAndGlyphs">Set As Default</text><text x="102.70" y="167.75" font-size="7.9" fill="#000" textLength="42.20" lengthAdjust="spacingAndGlyphs">Problem Type:</text><text x="112.90" y="181.45" font-size="7.9" fill="#000" textLength="33.30" lengthAdjust="spacingAndGlyphs">Write Time</text><text x="168.90" y="181.45" font-size="7.9" fill="#000" textLength="51.20" lengthAdjust="spacingAndGlyphs">Draw Hour Hand</text><text x="252.30" y="181.45" font-size="7.9" fill="#000" textLength="44.00" lengthAdjust="spacingAndGlyphs">Set As Default</text><text x="102.70" y="200.65" font-size="7.9" fill="#000" textLength="49.60" lengthAdjust="spacingAndGlyphs">Sample Problem:</text><text x="106.70" y="212.95" font-size="7.9" fill="#000" textLength="63.20" lengthAdjust="spacingAndGlyphs">Answer 1st Problem?</text><text x="188.70" y="212.95" font-size="7.9" fill="#000" textLength="12.10" lengthAdjust="spacingAndGlyphs">Yes</text><text x="219.50" y="212.95" font-size="7.9" fill="#000" textLength="9.80" lengthAdjust="spacingAndGlyphs">No</text><text x="250.00" y="212.95" font-size="7.9" fill="#000" textLength="49.40" lengthAdjust="spacingAndGlyphs">Save As Default</text><text x="102.70" y="231.15" font-size="7.9" fill="#000" textLength="23.50" lengthAdjust="spacingAndGlyphs">Printing:</text><text x="106.70" y="243.15" font-size="7.9" fill="#000" textLength="54.20" lengthAdjust="spacingAndGlyphs">Number of Copies:</text><text x="173.9" y="243.1" font-size="8" fill="#000">1</text><text x="209.90" y="243.15" font-size="7.9" fill="#000" textLength="46.40" lengthAdjust="spacingAndGlyphs">Answer Sheet?</text><text x="269.90" y="243.15" font-size="7.9" fill="#000" textLength="11.90" lengthAdjust="spacingAndGlyphs">Yes</text><text x="294.90" y="243.15" font-size="7.9" fill="#000" textLength="10.40" lengthAdjust="spacingAndGlyphs">No</text><text x="174.60" y="274.15" font-size="7.9" fill="#000" textLength="63.70" lengthAdjust="spacingAndGlyphs">Generate Worksheet</text><rect x="175.00" y="274.50" width="5.50" height="0.8" fill="#000"/><text x="142.50" y="302.95" font-size="7.9" fill="#000" textLength="16.50" lengthAdjust="spacingAndGlyphs">Save</text><rect x="142.80" y="303.30" width="4.70" height="0.8" fill="#000"/><text x="254.70" y="302.95" font-size="7.9" fill="#000" textLength="14.40" lengthAdjust="spacingAndGlyphs">Print</text><rect x="255.00" y="303.30" width="4.50" height="0.8" fill="#000"/><text x="144.70" y="331.15" font-size="7.9" fill="#000" textLength="11.40" lengthAdjust="spacingAndGlyphs">Exit</text><rect x="145.00" y="331.50" width="4.50" height="0.8" fill="#000"/><text x="254.40" y="331.15" font-size="7.9" fill="#000" textLength="14.90" lengthAdjust="spacingAndGlyphs">Help</text><rect x="254.70" y="331.50" width="5.10" height="0.8" fill="#000"/></svg>
</body></html>
